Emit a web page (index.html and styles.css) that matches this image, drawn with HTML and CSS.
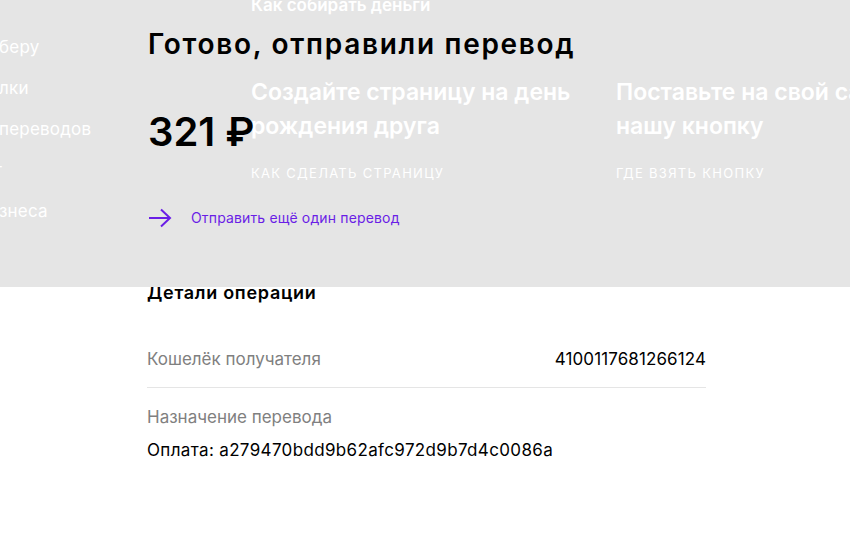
FILE: index.html
```html
<!DOCTYPE html>
<html lang="ru">
<head>
<meta charset="utf-8">
<title>Готово, отправили перевод</title>
<link rel="stylesheet" href="styles.css">
</head>
<body>
<div class="overlay">
  <div class="backdrop">
    <nav class="side-nav">
      <span class="nav-item">беру</span>
      <span class="nav-item">лки</span>
      <span class="nav-item">переводов</span>
      <span class="nav-item nav-cut">т</span>
      <span class="nav-item">знеса</span>
    </nav>
    <div class="promos">
      <div class="promo">
        <div class="promo-kicker">Как собирать деньги</div>
        <div class="promo-title">Создайте страницу на день рождения друга</div>
        <div class="promo-link">Как сделать страницу</div>
      </div>
      <div class="promo">
        <div class="promo-kicker">&nbsp;</div>
        <div class="promo-title nowrap">Поставьте на свой сайт<br>нашу кнопку</div>
        <div class="promo-link">Где взять кнопку</div>
      </div>
    </div>
  </div>
  <div class="modal">
    <h1 class="title">Готово, отправили перевод</h1>
    <div class="amount">321 ₽</div>
    <a class="again" href="#">
      <svg class="arrow" width="24" height="20" viewBox="0 0 24 20" aria-hidden="true">
        <path d="M1 10H22M13 1.5L22 10L13 18.5" fill="none" stroke="currentColor" stroke-width="2"/>
      </svg>
      <span>Отправить ещё один перевод</span>
    </a>
  </div>
</div>
<section class="details">
  <h2 class="details-title">Детали операции</h2>
  <div class="row row-split">
    <span class="label">Кошелёк получателя</span>
    <span class="value value-num">4100117681266124</span>
  </div>
  <div class="row row-stack">
    <span class="label">Назначение перевода</span>
    <span class="value">Оплата: a279470bdd9b62afc972d9b7d4c0086a</span>
  </div>
</section>
</body>
</html>
```
FILE: styles.css
```css
* { box-sizing: border-box; }
html, body { margin: 0; padding: 0; background: #fff; }
body {
  font-family: Inter, "Noto Sans", sans-serif;
  color: #000;
  width: 850px;
  height: 540px;
  overflow: hidden;
}
.overlay {
  position: relative;
  height: 287px;
  background: #e5e5e5;
  overflow: hidden;
}
.backdrop {
  position: absolute;
  inset: 0;
  display: flex;
  color: #fff;
}
.side-nav {
  flex: 0 0 251px;
  display: flex;
  flex-direction: column;
  padding-top: 36px;
  gap: 19px;
  font-size: 17px;
  line-height: 22px;
}
.nav-item { margin-left: -1px; letter-spacing: 0.2px; }
.nav-cut { margin-left: -6px; }
.promos {
  display: flex;
  flex-shrink: 0;
}
.promo {
  flex: 0 0 365px;
  display: flex;
  flex-direction: column;
}
.promo-kicker {
  margin-top: -6px;
  font-size: 17px;
  font-weight: 600;
  line-height: 22px;
}
.promo-title {
  margin-top: 59px;
  font-size: 23px;
  font-weight: 600;
  line-height: 34px;
  width: 340px;
}
.nowrap { white-space: nowrap; width: auto; }
.promo-link {
  margin-top: 21px;
  font-size: 13px;
  text-transform: uppercase;
  letter-spacing: 1.3px;
  line-height: 18px;
}
.modal {
  position: relative;
  padding: 26px 0 0 148px;
}
.title {
  margin: 0;
  font-size: 28px;
  font-weight: 600;
  letter-spacing: 1.7px;
  line-height: 36px;
}
.amount {
  margin-top: 46px;
  font-size: 40px;
  font-weight: 600;
  line-height: 48px;
}
.again {
  margin-top: 52px;
  display: flex;
  align-items: center;
  gap: 19px;
  color: #6a1ee6;
  text-decoration: none;
  font-size: 14px;
  letter-spacing: 0.15px;
  line-height: 20px;
}
.arrow { display: block; }
.details {
  width: 706px;
  padding-left: 147px;
}
.details-title {
  margin: -6px 0 0;
  font-size: 18px;
  font-weight: 600;
  letter-spacing: 0.7px;
  line-height: 24px;
}
.row { font-size: 17px; line-height: 22px; }
.row-split {
  display: flex;
  justify-content: space-between;
  align-items: center;
  padding: 43px 0 17px;
  border-bottom: 1px solid #e5e5e5;
}
.row-stack {
  display: flex;
  flex-direction: column;
  gap: 11px;
  padding-top: 18px;
}
.label { color: #808080; letter-spacing: 0; }
.value { color: #000; letter-spacing: 0.35px; }
.value-num { letter-spacing: 0.1px; }
```
